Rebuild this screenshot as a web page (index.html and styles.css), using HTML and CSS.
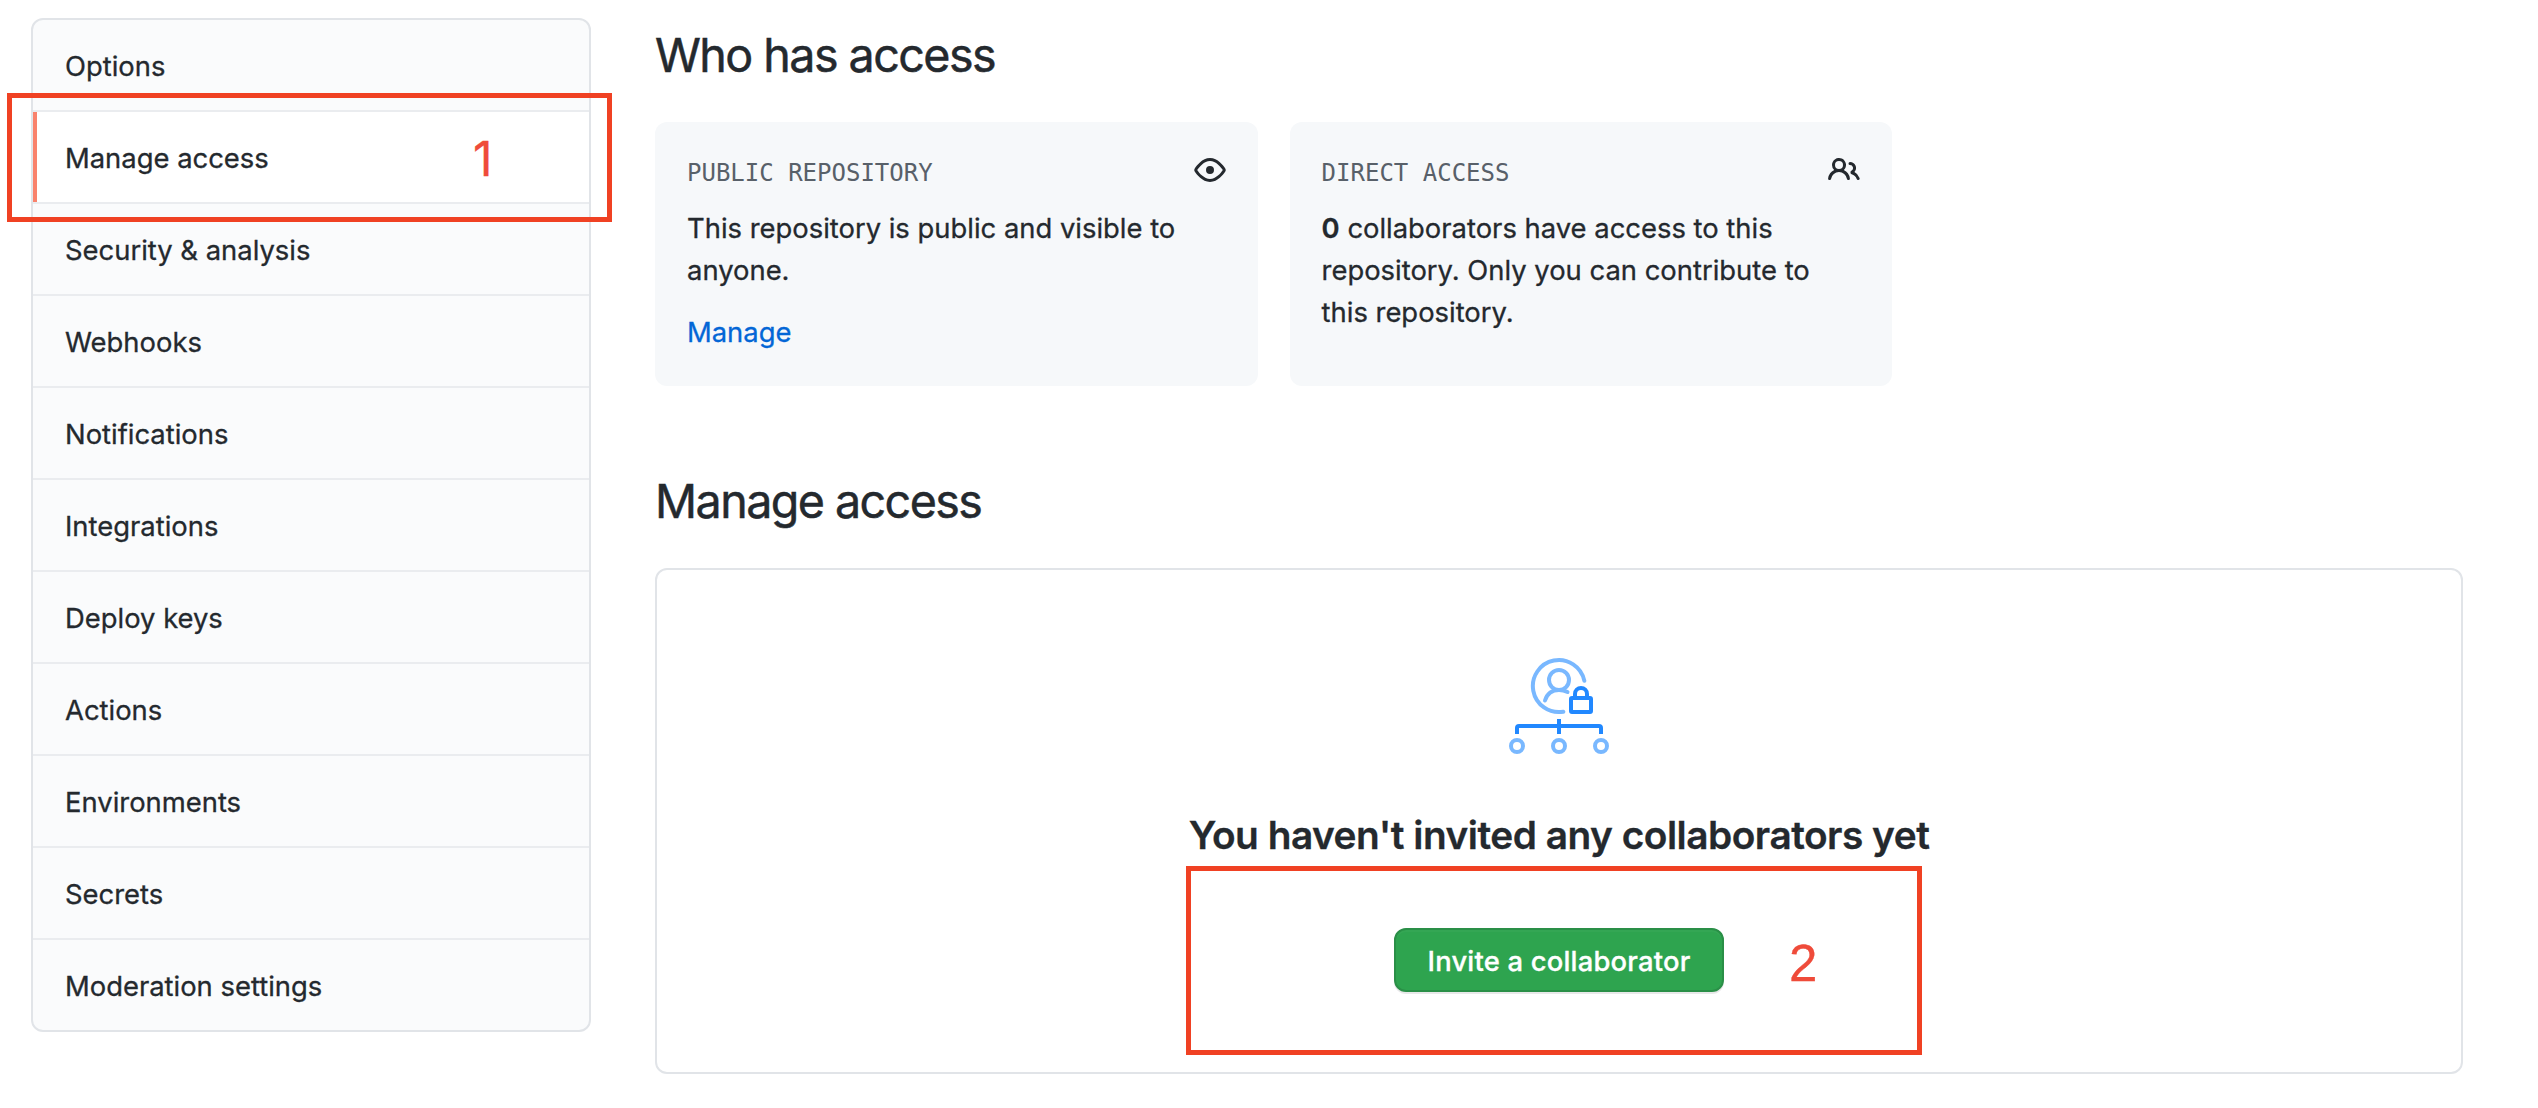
FILE: index.html
```html
<!DOCTYPE html>
<html lang="en">
<head>
<meta charset="utf-8">
<title>Manage access</title>
<link rel="stylesheet" href="styles.css">
</head>
<body>
<div class="page">
  <nav class="menu">
    <a class="menu-item">Options</a>
    <a class="menu-item selected">Manage access</a>
    <a class="menu-item">Security &amp; analysis</a>
    <a class="menu-item">Webhooks</a>
    <a class="menu-item">Notifications</a>
    <a class="menu-item">Integrations</a>
    <a class="menu-item">Deploy keys</a>
    <a class="menu-item">Actions</a>
    <a class="menu-item">Environments</a>
    <a class="menu-item">Secrets</a>
    <a class="menu-item">Moderation settings</a>
  </nav>

  <main class="content">
    <h2 class="heading">Who has access</h2>
    <div class="cards">
      <section class="card">
        <header class="card-header">
          <span class="card-label">PUBLIC REPOSITORY</span>
          <svg class="octicon" viewBox="0 0 16 16" width="32" height="32"><path fill-rule="evenodd" d="M1.679 7.932c.412-.621 1.242-1.75 2.366-2.717C5.175 4.242 6.527 3.5 8 3.5c1.473 0 2.824.742 3.955 1.715 1.124.967 1.954 2.096 2.366 2.717a.119.119 0 010 .136c-.412.621-1.242 1.75-2.366 2.717C10.825 11.758 9.473 12.5 8 12.5c-1.473 0-2.824-.742-3.955-1.715C2.92 9.818 2.09 8.69 1.679 8.068a.119.119 0 010-.136zM8 2c-1.981 0-3.67.992-4.933 2.078C1.797 5.169.88 6.423.43 7.1a1.619 1.619 0 000 1.798c.45.678 1.367 1.932 2.637 3.024C4.329 13.008 6.019 14 8 14c1.981 0 3.67-.992 4.933-2.078 1.27-1.091 2.187-2.345 2.637-3.023a1.619 1.619 0 000-1.798c-.45-.678-1.367-1.932-2.637-3.023C11.671 2.992 9.981 2 8 2zm0 8a2 2 0 100-4 2 2 0 000 4z"/></svg>
        </header>
        <p class="card-text">This repository is public and visible to anyone.</p>
        <a class="card-link">Manage</a>
      </section>
      <section class="card">
        <header class="card-header">
          <span class="card-label">DIRECT ACCESS</span>
          <svg class="octicon" viewBox="0 0 16 16" width="32" height="32"><path fill-rule="evenodd" d="M5.5 3.5a2 2 0 100 4 2 2 0 000-4zM2 5.5a3.5 3.5 0 115.898 2.549 5.507 5.507 0 013.034 4.084.75.75 0 11-1.482.235 4.001 4.001 0 00-7.9 0 .75.75 0 01-1.482-.236A5.507 5.507 0 013.102 8.05 3.49 3.49 0 012 5.5zM11 4a.75.75 0 100 1.5 1.5 1.5 0 01.666 2.844.75.75 0 00-.416.672v.352a.75.75 0 00.574.73c1.2.289 2.162 1.2 2.522 2.372a.75.75 0 101.434-.44 5.01 5.01 0 00-2.56-3.012A3 3 0 0011 4z"/></svg>
        </header>
        <p class="card-text"><strong>0</strong> collaborators have access to this repository. Only you can contribute to this repository.</p>
      </section>
    </div>

    <h2 class="heading heading-manage">Manage access</h2>
    <section class="blankslate">
      <svg class="illustration" viewBox="0 0 100 96" width="100" height="96" fill="none" stroke-width="4" stroke-linecap="round" stroke-linejoin="round">
        <g stroke="#79b8ff">
          <path d="M75.3 22.7A26 26 0 1 0 54.3 53.7"/>
          <circle cx="50" cy="22" r="10"/>
          <path d="M36 42.5C38 36 43 32 50 32c3.300 0 6 .7 8.500 2"/>
          <circle cx="8" cy="88" r="6"/>
          <circle cx="50" cy="88" r="6"/>
          <circle cx="92" cy="88" r="6"/>
        </g>
        <g stroke="#2188ff">
          <rect x="62" y="40" width="20" height="14" rx="1"/>
          <path d="M66 39v-3a6 6 0 0 1 12 0v3"/>
          <path stroke-linecap="butt" d="M8 76v-6q0-2 2-2h80q2 0 2 2v6M50 61v15"/>
        </g>
      </svg>
      <h3 class="blankslate-title">You haven't invited any collaborators yet</h3>
      <button class="invite">Invite a collaborator</button>
    </section>
  </main>
</div>

<div class="mark mark-menu"></div>
<span class="step step-one">1</span>
<div class="mark mark-invite"></div>
<span class="step step-two">2</span>
</body>
</html>
```
FILE: styles.css
```css
* {
  box-sizing: border-box;
}

body {
  margin: 0;
  background: #fff;
  color: #24292e;
  font: 400 27.4px/42px Inter, "Liberation Sans", sans-serif;
  -webkit-text-stroke: 0.3px;
}

.page {
  display: flex;
  align-items: flex-start;
  gap: 64px;
  padding: 18px 75px 0 31px;
}

.menu {
  flex: 0 0 560px;
  overflow: hidden;
  border: 2px solid #e1e4e8;
  border-radius: 12px;
  background: #fafbfc;
}

.menu-item {
  display: flex;
  align-items: center;
  height: 92px;
  padding: 2px 32px 0;
  border-bottom: 2px solid #eaecef;
}

.menu-item:last-child {
  height: 90px;
  border-bottom: 0;
}

.menu-item.selected {
  background: linear-gradient(#f9826c, #f9826c) left / 4px 100% no-repeat #fff;
  background-clip: padding-box;
}

.content {
  flex: 1;
  padding-top: 1px;
}

.heading {
  margin: 0 0 31px;
  font-size: 46.6px;
  font-weight: 400;
  line-height: 72px;
  letter-spacing: -1.55px;
  -webkit-text-stroke: 0.5px;
}

.heading-manage {
  margin-top: 79px;
}

.cards {
  display: flex;
  gap: 32px;
}

.card {
  flex: 0 0 602.6px;
  height: 264px;
  padding: 32px;
  border-radius: 12px;
  background: #f6f8fa;
}

.card-header {
  display: flex;
  justify-content: space-between;
  height: 38px;
  margin-bottom: 15px;
}

.card-label {
  color: #586069;
  font: 24px/38px "DejaVu Sans Mono", monospace;
  -webkit-text-stroke: 0;
}

.octicon {
  fill: #24292e;
}

.card-text {
  margin: 0 0 20px;
}

.card-text strong {
  font-weight: 600;
}

.card-link {
  display: block;
  color: #0366d6;
}

.blankslate {
  display: flex;
  flex-direction: column;
  align-items: center;
  height: 506px;
  padding-top: 88px;
  border: 2px solid #e1e4e8;
  border-radius: 12px;
}

.blankslate-title {
  margin: 51px 0 63px;
  font-size: 38.8px;
  font-weight: 600;
  line-height: 60px;
  letter-spacing: -0.5px;
}

.invite {
  width: 330px;
  height: 64px;
  padding: 1px 0 0;
  border: 2px solid #2a8f47;
  border-radius: 12px;
  background: #2ea44f;
  box-shadow: 0 2px 0 rgba(27, 31, 35, 0.1), inset 0 2px 0 rgba(255, 255, 255, 0.03);
  color: #fff;
  font: 500 27.4px/42px Inter, "Liberation Sans", sans-serif;
  letter-spacing: 0.2px;
}

/* Walkthrough highlights laid over the page */
.mark {
  position: absolute;
  border: 5px solid #f04123;
}

.mark-menu {
  left: 7px;
  top: 93px;
  width: 605px;
  height: 129px;
}

.mark-invite {
  left: 1186px;
  top: 866px;
  width: 736px;
  height: 189px;
}

.step {
  position: absolute;
  color: #ef4b3a;
}

.step-one {
  left: 473px;
  top: 135px;
  font: 48px/48px Inter, sans-serif;
}

.step-two {
  left: 1789px;
  top: 938px;
  font: 51px/51px "Liberation Sans", sans-serif;
}
```
